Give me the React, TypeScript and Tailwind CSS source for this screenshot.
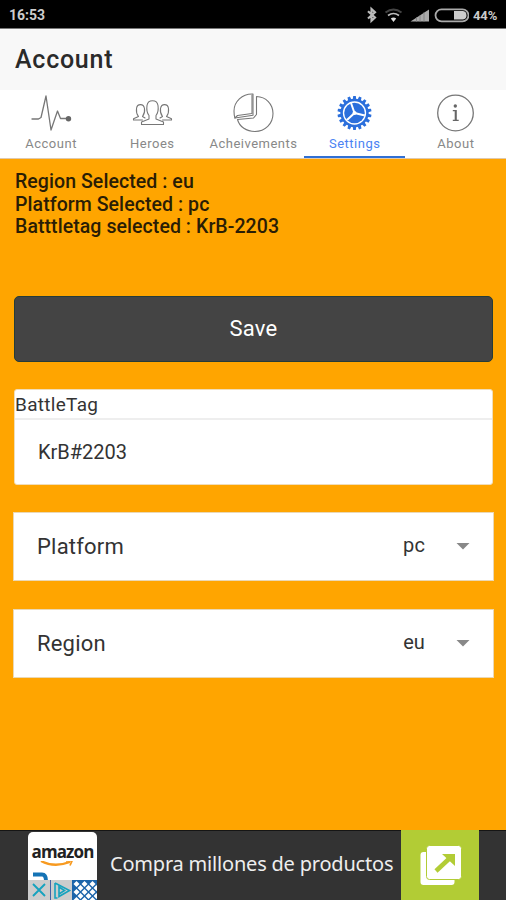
import React from "react";

const line = { fill: "none", stroke: "#777", strokeWidth: 1.1, strokeLinejoin: "round", strokeLinecap: "round" } as const;

function PulseIcon() {
  return (
    <svg width="42" height="40" viewBox="0 0 42 40">
      <path {...line} strokeWidth="1.300" d="M1.500 26H8L10.500 24.500L15.500 3L20.500 37L27 18L30 25.500H36" />
      <circle cx="38" cy="25.800" r="2.700" fill="#666" />
    </svg>
  );
}

function PeopleIcon() {
  return (
    <svg width="42" height="40" viewBox="0 0 42 40">
      <path {...line} d="M10 31.500V29L17.500 26V22.500C15.500 20 15 16 15.500 12.500C16 9 18 7.700 21 7.700S26 9 26.500 12.500C27 16 26.500 20 24.500 22.500V26L32 29V31.500Z" />
      <path {...line} d="M11 27H2V25.800L7 23.500C5 21 4.700 18 5 15.500C5.300 12.800 6.500 11.600 9 11.600S12.500 12.800 13 15.500C13.400 18 12.800 21 11 23.500L13.500 25" />
      <path {...line} d="M31 27H40V25.800L35 23.500C37 21 37.300 18 37 15.500C36.700 12.800 35.500 11.600 33 11.600S29.500 12.800 29 15.500C28.600 18 29.200 21 31 23.500L28.500 25" />
    </svg>
  );
}

function PieIcon() {
  return (
    <svg width="42" height="40" viewBox="0 0 42 40">
      <path {...line} d="M20.500 1C9.500 0.500 1.500 9 1.500 18Q1.500 22 2.400 25L20.500 22.300Z" />
      <path {...line} d="M24 3.500C33.500 3.800 40.500 11 40.500 20.500C40.500 31 32.500 38.500 22.500 38.500C14 38.500 7 34 5 26.500L21 25L24 21.500Z" />
      <path {...line} d="M2.400 25L5 22.500L19.500 20.500V2" />
    </svg>
  );
}

const teeth = Array.from({ length: 18 }, (_, i) => i * 20);

function GearIcon() {
  return (
    <svg width="42" height="40" viewBox="0 0 42 40">
      {teeth.map((a) => (
        <path key={a} d="M19.200 7L19.700 3H22.300L22.800 7Z" fill="#2b6fdc" transform={`rotate(${a} 21 20)`} />
      ))}
      <circle cx="21" cy="20" r="12.900" fill="none" stroke="#2b6fdc" strokeWidth="2.500" />
      <circle cx="21" cy="20" r="10.300" fill="#2b6fdc" />
      <path d="M21 20L17.500 10M21 20L31.300 22.500M21 20L13.500 27" stroke="#fff" strokeWidth="2" />
      <circle cx="21" cy="20" r="2" fill="#fff" />
    </svg>
  );
}

function InfoIcon() {
  return (
    <svg width="42" height="40" viewBox="0 0 42 40">
      <circle cx="21" cy="20" r="17.800" {...line} strokeWidth="1.300" />
      <circle cx="20.800" cy="13" r="1.700" fill="#666" />
      <path d="M18.300 17H22.300V26.700H24.200V28H18.300V26.700H20.200V18.300H18.300Z" fill="#666" />
    </svg>
  );
}

const tabs = [
  { label: "Account", icon: <PulseIcon /> },
  { label: "Heroes", icon: <PeopleIcon /> },
  { label: "Acheivements", icon: <PieIcon /> },
  { label: "Settings", icon: <GearIcon />, active: true },
  { label: "About", icon: <InfoIcon /> },
];

function StatusBar() {
  return (
    <div className="flex h-[28px] shrink-0 items-center bg-black pl-[9px] pr-[8px] pt-[2px] text-[#ccc]">
      <span className="text-[14px] font-bold leading-none">16:53</span>
      <svg className="-mt-px ml-auto" width="103" height="18" viewBox="0 0 103 18">
        <path d="M2 5.200L9 11.500L5.500 14.800V3L9 6.200L2 12.500" fill="none" stroke="#bbb" strokeWidth="2.200" />
        <path d="M19.500 6.500Q27.500 0.500 35.500 6.500" fill="none" stroke="#444" strokeWidth="2" />
        <path d="M22 9.500Q27.500 5.500 33 9.500" fill="none" stroke="#bbb" strokeWidth="1.700" />
        <path d="M24.800 12.500Q27.500 10.500 30.200 12.500L27.500 16Z" fill="#ddd" />
        <path d="M44.500 15.500L63 3.500V15.500Z" fill="#aaa" />
        <path d="M50.500 11V16M54 9V16M58 6V16" stroke="#777" strokeWidth=".7" />
        <rect x="69.500" y="3.300" width="33" height="12" rx="6" fill="none" stroke="#aaa" strokeWidth="1.800" />
        <path d="M88 5H97Q100.500 5.500 100.500 9.300T97 13.600H88Z" fill="#ccc" />
      </svg>
      <span className="ml-[4px] w-[25px] whitespace-nowrap text-[13px] font-bold leading-none tracking-[-0.1px]">44%</span>
    </div>
  );
}

function SelectRow({ label, value }: { label: string; value: string }) {
  return (
    <div className="flex h-[69px] items-center border border-[#ead8b5] bg-white pl-[23px] pr-[23px] text-[#333]">
      <span className="text-[22px] tracking-[0.2px]">{label}</span>
      <span className="ml-auto -translate-y-px text-[20px] leading-6 tracking-[0.1px]">{value}</span>
      <svg className="ml-[31px]" width="14" height="7" viewBox="0 0 14 7">
        <path d="M0.500 0H13.500L7 6.500Z" fill="#888" />
      </svg>
    </div>
  );
}

function AmazonTile() {
  return (
    <div className="ml-[28px] mt-px flex h-[69px] w-[69px] flex-col overflow-hidden rounded-t-[5px] bg-white">
      <div className="h-[29px] pt-[9px] text-center font-['Open_Sans',sans-serif] text-[17px] font-bold leading-[22px] tracking-[-0.9px] text-[#222]">amazon</div>
      <svg width="69" height="40" viewBox="0 0 69 40">
        <path d="M13 0Q26 7 42 1" fill="none" stroke="#f79a20" strokeWidth="2.300" />
        <path d="M38 0H44L42 4.500" fill="none" stroke="#f79a20" strokeWidth="1.700" />
        <path d="M5 13.500H14Q18 13.500 18 20" fill="none" stroke="#1573b5" strokeWidth="4" />
        <rect y="19" width="44" height="21" fill="#ccc" />
        <path d="M5 23L17 35M17 23L5 35" stroke="#16a2be" strokeWidth="1.900" />
        <path d="M22.500 19V40" stroke="#4462a5" />
        <path d="M27 22V37H29.500M27 22L41.500 29.500L31 35.500V26L36.500 29.500L31 33" fill="none" stroke="#16a2be" strokeWidth="1.600" />
        <rect x="44" y="19" width="25" height="21" fill="#1b64aa" />
        <g fill="#fff">
          {[0, 1, 2].map((r) => [0, 1, 2].map((c) => (
            <path key={`${r}-${c}`} d="M4 0L7 3L4 6L1 3Z" transform={`translate(${44.500 + c * 8} ${20 + r * 8})`} />
          )))}
          {[0, 1].map((r) => [0, 1, 2].map((c) => (
            <path key={`${r}-${c}`} d="M4 0L7 3L4 6L1 3Z" transform={`translate(${48.500 + c * 8} ${24 + r * 8})`} />
          )))}
        </g>
      </svg>
    </div>
  );
}

export default function App() {
  return (
    <div className="flex h-[900px] w-[506px] flex-col overflow-hidden bg-[#ffa500] font-['Roboto',sans-serif]">
      <StatusBar />
      <header className="flex h-[62px] shrink-0 items-center border-t border-[#777] bg-[#f8f8f8] pl-[15px] text-[25px] font-medium tracking-[0.75px] text-[#2a2a2a]">Account</header>
      <nav className="grid h-[69px] shrink-0 grid-cols-5 border-b border-[#dfc9ad] bg-white">
        {tabs.map((tab) => (
          <div key={tab.label} className={tab.active ? "flex flex-col items-center border-b-2 border-[#3070d5] pt-[3px] text-[#4b83f3]" : "flex flex-col items-center pt-[3px] text-[#888]"}>
            <div className="translate-x-[0.5px]">{tab.icon}</div>
            <span className="mt-[2px] translate-x-[0.5px] whitespace-nowrap text-[13px] leading-[18px] tracking-[0.5px]">{tab.label}</span>
          </div>
        ))}
      </nav>
      <main className="flex flex-1 flex-col pt-[12px]">
        <div className="px-[15px] text-[19.500px] font-medium leading-[22.500px] tracking-[0.07px] text-[#2a1d05]">
          <div>Region Selected : eu</div>
          <div>Platform Selected : pc</div>
          <div>Batttletag selected : KrB-2203</div>
        </div>
        <button className="ml-[14px] mr-[13px] mt-[57px] h-[66px] shrink-0 rounded-[5px] border border-[#263c38] bg-[#444] text-[22px] tracking-[0.2px] text-white">Save</button>
        <div className="ml-[14px] mr-[13px] mt-[27px] h-[96px] shrink-0 rounded-[3px] border border-[#f0ddb9] bg-white text-[#333]">
          <div className="h-[30px] border-b-2 border-[#eee] text-[19px] leading-[29px] tracking-[0.3px]">BattleTag</div>
          <div className="pl-[23px] text-[20px] leading-[65px]">KrB#2203</div>
        </div>
        <div className="ml-[13px] mr-[12px] mt-[27px] flex flex-col gap-[28px]">
          <SelectRow label="Platform" value="pc" />
          <SelectRow label="Region" value="eu" />
        </div>
      </main>
      <footer className="flex h-[70px] shrink-0 items-start border-t border-[#151515] bg-[#333]">
        <AmazonTile />
        <span className="ml-[13px] w-[291px] whitespace-nowrap font-['Noto_Sans',sans-serif] text-[20px] leading-[66px] tracking-[-0.2px] text-[#eee]">Compra millones de productos</span>
        <div className="-mt-px h-[70px] w-[78px] bg-[#b2cc35]">
          <svg width="78" height="70" viewBox="0 0 78 70">
            <rect x="19.500" y="22" width="34" height="33" rx="3" fill="#fff" />
            <rect x="25.500" y="15.500" width="35" height="34" rx="3" fill="#fff" stroke="#b2cc35" />
            <path d="M35 41L50 27" stroke="#b2cc35" strokeWidth="4.500" />
            <path d="M41 24H54V36Z" fill="#b2cc35" />
          </svg>
        </div>
      </footer>
    </div>
  );
}
